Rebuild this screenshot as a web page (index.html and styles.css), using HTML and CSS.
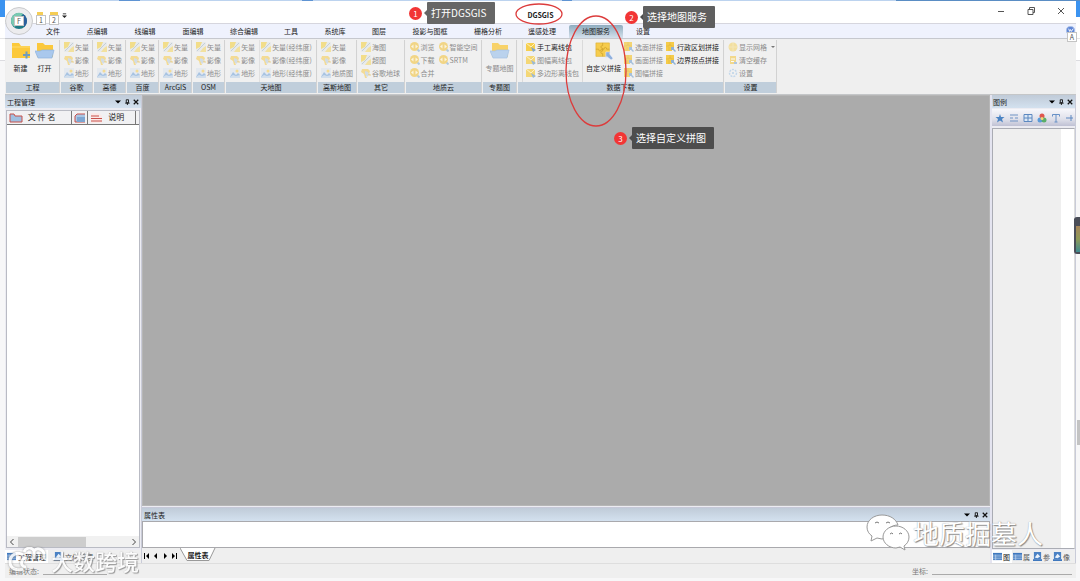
FILE: index.html
```html
<!doctype html>
<html lang="zh-CN">
    <head>
        <meta charset="utf-8">
        <title>DGSGIS</title>
        <link rel="stylesheet" href="styles.css">
    </head>
    <body>
        <svg class="defs" aria-hidden="true">
            <symbol id="vector" viewBox="0 0 10 10">
                <rect width="10" height="10" fill="#e6e9ea" />
                <path d="M0 0h6L4 5 0 7z" fill="#f3d768" />
                <path d="M10 4v6H4l3-4z" fill="#f3dc85" />
                <path d="M1 9l3-3 5-5" stroke="#b4c4d0" fill="none" />
            </symbol>
            <symbol id="image" viewBox="0 0 10 10">
                <path d="M1 1h6l2 2-1 3-2-1-1 2 1 3H4L3 6 0 4z" fill="#f4d477" />
                <path d="M4 3l3 1 1 3-2 2-2-3z" fill="#c8d6e0" />
                <path d="M7 7l2-1v2" stroke="#e8c66b" fill="none" />
            </symbol>
            <symbol id="terrain" viewBox="0 0 10 10">
                <rect width="10" height="10" fill="#e1e7ef" />
                <path d="M0 9l3-5 3 3 2-2 2 2v3H0z" fill="#8fb5de" />
                <path d="M0 9l3-2 3 1 4-1v3H0z" fill="#c7d9eb" />
                <circle cx="7" cy="3" r="1.5" fill="#f4d477" />
            </symbol>
            <symbol id="globe" viewBox="0 0 10 10">
                <path d="M7 7l2.500 2.500" stroke="#9dbddb" stroke-width="2" />
                <circle cx="4.500" cy="4.500" r="4.500" fill="#f2cd63" />
                <path d="M1 4.500l2.500-2v4zM8 4.500l-2.500-2v4z" fill="#fff6d8" />
            </symbol>
            <symbol id="pack" viewBox="0 0 10 10">
                <path d="M0 1h9v8H0z" fill="#f6cf4e" />
                <path d="M0 1l5 4 4-4" stroke="#fff1bd" fill="none" />
                <path d="M5 5l5 3-3 2z" fill="#7ea6cc" />
            </symbol>
            <symbol id="join" viewBox="0 0 10 10">
                <path d="M0 0h8v6H6v3H0z" fill="#f5cb48" />
                <path d="M0 4h3V3h2v1h3M4 0v3M3 5v4" stroke="#d9b03a" stroke-width=".5" fill="none" />
                <path d="M5 5h3v2l2 2-1 1-2-2H5z" fill="#8db1d6" />
            </symbol>
            <symbol id="folder-new" viewBox="0 0 20 18">
                <path d="M1 1h7l2 3h9v12H1z" fill="#fcc93a" />
                <path d="M1 5h18" stroke="#ffdc6c" />
                <path d="M12 13h7M15.500 9.500v7" stroke="#6f9cbd" stroke-width="2" />
            </symbol>
            <symbol id="folder-open" viewBox="0 0 20 18">
                <path d="M2 1h6l2 2h8v12H2z" fill="#fbc83b" />
                <path d="M0 9h5l2-1h12l-2 8H3z" fill="#a9c8ed" stroke="#8db3de" stroke-width=".7" />
            </symbol>
            <symbol id="puzzle" viewBox="0 0 20 20">
                <path d="M1 1h15v15H1z" fill="#f6cc4c" stroke="#dcae2c" stroke-width=".6" />
                <path d="M8.500 1v3q-2 0-2 1.500T8.500 7v3q-2 0-2 1.500t2 1.500v3M1 8h3q0 2 1.500 2T7 8h3q0-2 1.500-2T13 8h3" stroke="#c79a28" stroke-width=".7" fill="none" />
                <path d="M12 11h5l-1 2 4 5-2 2-5-4-1 2z" fill="#8eb0dc" stroke="#eef" stroke-width=".6" />
            </symbol>
            <symbol id="table-blue" viewBox="0 0 10 10">
                <path d="M0 1h10v8H0z" fill="#3f78be" />
                <path d="M0 3.500h10M0 5.500h10M0 7.500h10M3 3v6" stroke="#cfe0f5" stroke-width=".7" />
            </symbol>
            <symbol id="photo-blue" viewBox="0 0 10 10">
                <path d="M1 0h8v8H1z" fill="#4b82c4" />
                <path d="M2 6l3-4 3 3-3 2z" fill="#eaf2fb" />
                <path d="M0 9h10" stroke="#3f78be" stroke-width="2" />
            </symbol>
            <symbol id="caret" viewBox="0 0 8 8"><path d="M0 2h8L4 6z" /></symbol>
            <symbol id="pin" viewBox="0 0 8 8"><path d="M3 1h3v4H3zM1.500 5.500h6M4.500 5v3" fill="none" stroke="#111" stroke-width="1.200" /></symbol>
            <symbol id="close" viewBox="0 0 8 8"><path d="M1 1l6 6M7 1L1 7" stroke="#111" stroke-width="1.600" /></symbol>
        </svg>

        <div class="window">
            <header class="titlebar">
                <button class="orb" aria-label="菜单">
                    <svg viewBox="0 0 28 28">
                        <circle cx="14" cy="14" r="13.500" fill="#ececee" stroke="#c9cacc" />
                        <circle cx="14" cy="14" r="8" fill="#1e7a86" />
                        <path d="M6 14a8 8 0 0 1 12-7l-4 4-4 9a8 8 0 0 1-4-6z" fill="#79c9b0" />
                        <path d="M18 7a8 8 0 0 1 1 13l-2-6z" fill="#2b5f9e" />
                    </svg>
                    <span class="keytip">F</span>
                </button>
                <div class="quick">
                    <button class="quick-btn new"><span class="keytip">1</span></button>
                    <button class="quick-btn open"><span class="keytip">2</span></button>
                    <button class="quick-more" aria-label="更多">
                        <svg viewBox="0 0 6 6"><path d="M1 1h4" stroke="#222" /><path d="M0 3h6L3 6z" fill="#222" /></svg>
                    </button>
                </div>
                <h1>DGSGIS</h1>
                <div class="winbtns">
                    <button aria-label="最小化"><svg viewBox="0 0 8 8"><path d="M1 4.500h6" /></svg></button>
                    <button aria-label="还原"><svg viewBox="0 0 8 8"><path d="M1 2.500h5v5H1zM2.500 2V.500h5v5H6" /></svg></button>
                    <button aria-label="关闭"><svg viewBox="0 0 8 8"><path d="M1 1l6 6M7 1L1 7" /></svg></button>
                </div>
            </header>

            <nav class="tabs">
                <button class="c2">文件</button>
                <button class="c3">点编辑</button>
                <button class="c3">线编辑</button>
                <button class="c3">面编辑</button>
                <button class="c4">综合编辑</button>
                <button class="c2">工具</button>
                <button class="c3">系统库</button>
                <button class="c2">图层</button>
                <button class="c5">投影与图框</button>
                <button class="c4">栅格分析</button>
                <button class="c4">遥感处理</button>
                <button class="c4 active">地图服务</button>
                <button class="c2">设置</button>
                <button class="help" aria-label="帮助">
                    <svg viewBox="0 0 10 10"><circle cx="5" cy="5" r="4.500" fill="#5f86d6" stroke="#a9bfe8" /><path d="M3 3l1 3 1-2 1 2 2-3" stroke="#fff" fill="none" /></svg>
                    <span class="keytip">A</span>
                </button>
            </nav>

            <div class="ribbon">
                <section class="group g-project">
                    <div class="items">
                        <button class="big"><svg><use href="#folder-new" /></svg>新建</button>
                        <button class="big"><svg><use href="#folder-open" /></svg>打开</button>
                    </div>
                    <h2>工程</h2>
                </section>
                <section class="group g-map">
                    <div class="items"><div class="col">
                        <button disabled><svg><use href="#vector" /></svg>矢量</button>
                        <button disabled><svg><use href="#image" /></svg>影像</button>
                        <button disabled><svg><use href="#terrain" /></svg>地形</button>
                    </div></div>
                    <h2>谷歌</h2>
                </section>
                <section class="group g-map">
                    <div class="items"><div class="col">
                        <button disabled><svg><use href="#vector" /></svg>矢量</button>
                        <button disabled><svg><use href="#image" /></svg>影像</button>
                        <button disabled><svg><use href="#terrain" /></svg>地形</button>
                    </div></div>
                    <h2>高德</h2>
                </section>
                <section class="group g-map">
                    <div class="items"><div class="col">
                        <button disabled><svg><use href="#vector" /></svg>矢量</button>
                        <button disabled><svg><use href="#image" /></svg>影像</button>
                        <button disabled><svg><use href="#terrain" /></svg>地形</button>
                    </div></div>
                    <h2>百度</h2>
                </section>
                <section class="group g-map">
                    <div class="items"><div class="col">
                        <button disabled><svg><use href="#vector" /></svg>矢量</button>
                        <button disabled><svg><use href="#image" /></svg>影像</button>
                        <button disabled><svg><use href="#terrain" /></svg>地形</button>
                    </div></div>
                    <h2>ArcGIS</h2>
                </section>
                <section class="group g-map">
                    <div class="items"><div class="col">
                        <button disabled><svg><use href="#vector" /></svg>矢量</button>
                        <button disabled><svg><use href="#image" /></svg>影像</button>
                        <button disabled><svg><use href="#terrain" /></svg>地形</button>
                    </div></div>
                    <h2>OSM</h2>
                </section>
                <section class="group g-tianditu">
                    <div class="items">
                        <div class="col">
                            <button disabled><svg><use href="#vector" /></svg>矢量</button>
                            <button disabled><svg><use href="#image" /></svg>影像</button>
                            <button disabled><svg><use href="#terrain" /></svg>地形</button>
                        </div>
                        <div class="col sep">
                            <button disabled><svg><use href="#vector" /></svg>矢量(经纬度)</button>
                            <button disabled><svg><use href="#image" /></svg>影像(经纬度)</button>
                            <button disabled><svg><use href="#terrain" /></svg>地形(经纬度)</button>
                        </div>
                    </div>
                    <h2>天地图</h2>
                </section>
                <section class="group g-gauss">
                    <div class="items"><div class="col">
                        <button disabled><svg><use href="#vector" /></svg>矢量</button>
                        <button disabled><svg><use href="#image" /></svg>影像</button>
                        <button disabled><svg><use href="#terrain" /></svg>地质图</button>
                    </div></div>
                    <h2>高斯地图</h2>
                </section>
                <section class="group g-other">
                    <div class="items"><div class="col">
                        <button disabled><svg><use href="#vector" /></svg>海图</button>
                        <button disabled><svg><use href="#vector" /></svg>超图</button>
                        <button disabled><svg><use href="#image" /></svg>谷歌地球</button>
                    </div></div>
                    <h2>其它</h2>
                </section>
                <section class="group g-cloud">
                    <div class="items">
                        <div class="col">
                            <button disabled><svg><use href="#globe" /></svg>浏览</button>
                            <button disabled><svg><use href="#globe" /></svg>下载</button>
                            <button disabled><svg><use href="#globe" /></svg>合并</button>
                        </div>
                        <div class="col">
                            <button disabled><svg><use href="#globe" /></svg>智能空间</button>
                            <button disabled><svg><use href="#globe" /></svg>SRTM</button>
                        </div>
                    </div>
                    <h2>地质云</h2>
                </section>
                <section class="group g-theme">
                    <div class="items">
                        <button class="big" disabled><svg><use href="#folder-open" /></svg>专题地图</button>
                    </div>
                    <h2>专题图</h2>
                </section>
                <section class="group g-download">
                    <div class="items">
                        <div class="col sep">
                            <button><svg><use href="#pack" /></svg>手工离线包</button>
                            <button disabled><svg><use href="#pack" /></svg>图幅离线包</button>
                            <button disabled><svg><use href="#pack" /></svg>多边形离线包</button>
                        </div>
                        <button class="big sep"><svg><use href="#puzzle" /></svg>自定义拼接</button>
                        <div class="col">
                            <button disabled><svg><use href="#join" /></svg>选面拼接</button>
                            <button disabled><svg><use href="#join" /></svg>画面拼接</button>
                            <button disabled><svg><use href="#join" /></svg>图幅拼接</button>
                        </div>
                        <div class="col">
                            <button><svg><use href="#join" /></svg>行政区划拼接</button>
                            <button><svg><use href="#join" /></svg>边界拐点拼接</button>
                        </div>
                    </div>
                    <h2>数据下载</h2>
                </section>
                <section class="group g-settings">
                    <div class="items"><div class="col">
                        <button disabled><svg viewBox="0 0 10 10"><circle cx="5" cy="5" r="4.500" fill="#f3da85" /><path d="M1 5h8M5 1v8" stroke="#f6e3a4" /></svg>显示网格<i class="drop"></i></button>
                        <button disabled><svg viewBox="0 0 10 10"><path d="M2 1h6v8H2z" fill="#f3d16a" /><path d="M3 4h4M3 6.500h3" stroke="#fff" /><path d="M6 7h3v2H6z" fill="#9bb9da" /></svg>清空缓存</button>
                        <button disabled><svg viewBox="0 0 10 10"><circle cx="5" cy="5" r="3.500" fill="none" stroke="#b4cfe9" stroke-width="1.500" stroke-dasharray="2 1" /><circle cx="5" cy="5" r="1" fill="#a9c8e6" /></svg>设置</button>
                    </div></div>
                    <h2>设置</h2>
                </section>
            </div>

            <main class="workspace">
                <aside class="project">
                    <div class="panel-title">
                        <span>工程管理</span>
                        <button aria-label="菜单"><svg><use href="#caret" /></svg></button>
                        <button aria-label="固定"><svg><use href="#pin" /></svg></button>
                        <button aria-label="关闭"><svg><use href="#close" /></svg></button>
                    </div>
                    <div class="file-list">
                        <table>
                            <tr>
                                <th class="name">
                                    <svg viewBox="0 0 14 10"><path d="M1 1h4l1 2h7v6H1z" fill="#9fc0e2" stroke="#c8504b" /></svg>
                                    文 件 名
                                </th>
                                <th class="kind"><svg viewBox="0 0 14 10"><path d="M11 1H3L1 3v6h10" fill="#a9c6e4" stroke="#c8504b" /><path d="M3 4h8v5H3z" fill="#7ea6d2" /></svg></th>
                                <th class="desc">
                                    <svg viewBox="0 0 14 10"><path d="M1 0h8l3 3v7H1z" fill="#fbe9e7" /><path d="M1 3h8M1 5.500h11M1 8h11" stroke="#c8504b" /></svg>
                                    说明
                                </th>
                                <th class="rest"></th>
                            </tr>
                        </table>
                        <div class="hscroll">
                            <svg viewBox="0 0 6 8"><path d="M4.500 1L1.500 4l3 3" /></svg>
                            <div class="track"><div class="thumb"></div></div>
                            <svg viewBox="0 0 6 8"><path d="M1.500 1l3 3-3 3" /></svg>
                        </div>
                    </div>
                    <div class="dock-tabs">
                        <button class="active"><svg><use href="#table-blue" /></svg>工程管理</button>
                        <button><svg><use href="#photo-blue" /></svg>文件管理</button>
                    </div>
                </aside>

                <section class="center">
                    <div class="canvas"></div>
                    <div class="attributes">
                        <div class="panel-title">
                            <span>属性表</span>
                            <button aria-label="菜单"><svg><use href="#caret" /></svg></button>
                            <button aria-label="固定"><svg><use href="#pin" /></svg></button>
                            <button aria-label="关闭"><svg><use href="#close" /></svg></button>
                        </div>
                        <div class="sheet"></div>
                        <div class="sheet-tabs">
                            <button aria-label="第一页"><svg viewBox="0 0 6 6"><path d="M0 0h1v6H0zM5 0v6L2 3z" /></svg></button>
                            <button aria-label="上一页"><svg viewBox="0 0 6 6"><path d="M4 0v6L1 3z" /></svg></button>
                            <button aria-label="下一页"><svg viewBox="0 0 6 6"><path d="M2 0v6l3-3z" /></svg></button>
                            <button aria-label="最后一页"><svg viewBox="0 0 6 6"><path d="M1 0v6l3-3zM5 0h1v6H5z" /></svg></button>
                            <button class="sheet-tab">
                                <svg viewBox="0 0 36 14"><path d="M0 0l7 12.500h22L35 0" fill="#fff" stroke="#999" /></svg>
                                <span>属性表</span>
                            </button>
                        </div>
                    </div>
                </section>

                <aside class="legend">
                    <div class="panel-title">
                        <span>图例</span>
                        <button aria-label="菜单"><svg><use href="#caret" /></svg></button>
                        <button aria-label="固定"><svg><use href="#pin" /></svg></button>
                        <button aria-label="关闭"><svg><use href="#close" /></svg></button>
                    </div>
                    <div class="toolbar">
                        <button aria-label="点"><svg viewBox="0 0 10 10"><path d="M5 1l1 3h3.500L7 6l1 3.500-3-2-3 2L3 6 .500 4H4z" fill="#4b83c3" /></svg></button>
                        <button aria-label="线"><svg viewBox="0 0 10 10"><path d="M1 2h8M1 5h3M6 5h3M1 8h8" stroke="#6e93c4" /></svg></button>
                        <button aria-label="面"><svg viewBox="0 0 10 10"><path d="M1 1.500h8v7H1zM5 1.500v7M1 5h8" stroke="#5c88c0" fill="#dce8f6" /></svg></button>
                        <button aria-label="颜色"><svg viewBox="0 0 10 10"><circle cx="5" cy="3" r="2.500" fill="#e0564e" /><circle cx="3" cy="7" r="2.500" fill="#5a9ad8" /><circle cx="7" cy="7" r="2.500" fill="#5aae6a" /><circle cx="5" cy="5.500" r="1.500" fill="#f2d77a" /></svg></button>
                        <button aria-label="文字"><svg viewBox="0 0 10 10"><path d="M1.500 3.500V1.500h7v2M5 1.500V9M3.500 9h3" stroke="#6790c6" fill="none" /></svg></button>
                        <button aria-label="更多"><svg viewBox="0 0 10 10"><path d="M1 5h7M6 2v6" stroke="#5c88c0" /></svg></button>
                    </div>
                    <div class="legend-list"><div></div></div>
                    <div class="dock-tabs">
                        <button class="active"><svg><use href="#table-blue" /></svg>图</button>
                        <button><svg><use href="#table-blue" /></svg>属</button>
                        <button><svg><use href="#photo-blue" /></svg>参</button>
                        <button><svg><use href="#photo-blue" /></svg>像</button>
                    </div>
                </aside>
            </main>

            <footer class="status">
                <span>编辑状态:</span><i class="line state"></i>
                <span class="coord">坐标:</span><i class="line"></i>
            </footer>
        </div>

        <!-- things behind and beside the window -->
        <div class="monitor"></div>
        <div class="page-thumb"></div>

        <!-- steps -->
        <svg class="ring ring-title" viewBox="0 0 48 22"><ellipse cx="24" cy="11" rx="23" ry="10" /></svg>
        <svg class="ring ring-tool" viewBox="0 0 62 112"><ellipse cx="31" cy="56" rx="30" ry="55" /></svg>
        <div class="step step-1"><b>1</b><span>打开DGSGIS</span></div>
        <div class="step step-2"><b>2</b><span>选择地图服务</span></div>
        <div class="step step-3"><b>3</b><span>选择自定义拼图</span></div>

        <div class="mark mark-left">
            <svg viewBox="0 0 40 26"><path d="M15 8C9 4 2 8 2 15s7 9 13 7M19 11c-6-1-8 9-1 9M16 5c2-5 8-5 10-1 3-4 10-2 10 4v4M26 4v8" /></svg>
            <span>大数跨境</span>
        </div>
        <div class="mark mark-right">
            <svg viewBox="0 0 44 38">
                <path d="M16 1C8 1 1 6 1 13c0 4 2 7 5 9l-1 5 6-3 5 1 4-1c-1-8 5-13 12-13C30 5 24 1 16 1z" />
                <path d="M30 12c-7 0-13 5-13 11s6 11 13 11l4-1 5 3-1-4c3-2 5-5 5-9 0-6-6-11-13-11z" />
                <path class="eyes" d="M9 9q2-2 4 0M20 9q2-2 4 0M24 20q2-2 3 0M33 20q2-2 3 0" />
            </svg>
            <span>地质掘墓人</span>
        </div>
    </body>
</html>
```

FILE: styles.css
```css
* {
    box-sizing: border-box;
}

body {
    margin: 0;
    height: 100vh;
    padding: 1px 4px 3px 5px;
    display: flex;
    position: relative;
    overflow: hidden;
    font: 7px/10px "Noto Sans CJK SC", sans-serif;
    color: #1c1c1c;
    background:
        linear-gradient(90deg, #3b93f0 5px, #bcd3ef 5px 11%, #5f94d3 11% 13%, #bcd3ef 13% 28%, #5f94d3 28% 29%, #bcd3ef 29% 52%, #5f94d3 52% 53%, #bcd3ef 53% 83%, #5a8dc4 83%) 0 0 / 100% 1px no-repeat,
        linear-gradient(#3b93f0 17px, #fff 17px 38px, #e4e4e6 38px 39px, #fff 39px 60px, #dcdce0 60px 61px, #f7f7f8 61px);
}

button {
    font: inherit;
    color: inherit;
    border: 0;
    padding: 0;
    margin: 0;
    background: none;
    white-space: nowrap;
}

h1, h2 {
    margin: 0;
    font-size: 7px;
    font-weight: normal;
}

svg {
    display: block;
    flex: none;
}

.defs {
    position: absolute;
    width: 0;
    height: 0;
}

.window {
    flex: 1;
    min-width: 0;
    display: flex;
    flex-direction: column;
    background: #efefef;
}

/* title bar */
.titlebar {
    height: 22px;
    position: relative;
    display: flex;
    align-items: center;
    justify-content: center;
    background: #fff;

    h1 {
        font-weight: bold;
        padding-top: 6px;
    }
}

.keytip {
    display: block;
    width: 10px;
    height: 10px;
    line-height: 9px;
    border: 1px solid #c4c4c4;
    background: #fff;
    color: #555;
    text-align: center;
}

.orb {
    position: absolute;
    left: 0;
    top: 6px;
    width: 28px;
    height: 28px;
    z-index: 2;

    .keytip {
        position: absolute;
        left: 9px;
        top: 9px;
    }
}

.quick {
    position: absolute;
    left: 31px;
    top: 10px;
    display: flex;
    gap: 3px;
    z-index: 2;
}

.quick-btn {
    padding-top: 4px;
    background: linear-gradient(#f5cd55, #f5cd55) 1px 1px / 6px 5px no-repeat;

    &.open {
        background-size: 8px 4px;
    }
}

.quick-more svg {
    width: 5px;
    height: 5px;
    margin-bottom: 6px;
}

.winbtns {
    position: absolute;
    right: 0;
    top: 0;
    display: flex;

    button {
        width: 30px;
        height: 20px;
        display: grid;
        place-items: center;
    }

    svg {
        width: 8px;
        height: 8px;
        fill: none;
        stroke: #555;
        stroke-width: 1;
    }
}

/* menu */
.tabs {
    height: 16px;
    display: flex;
    padding: 1px 0 0 28px;
    position: relative;
    background: #eff2fd;
    border-top: 1px solid #d6d6de;
    border-bottom: 1px solid #c6c8ce;

    button {
        padding-bottom: 2px;
    }

    .c2 { width: 40px; }
    .c3 { width: 48px; }
    .c4 { width: 54px; }
    .c5 { width: 62px; }

    .active {
        background: linear-gradient(#8fadbf, #d4e0ec);
        border-radius: 2px 2px 0 0;
    }

    .help {
        position: absolute;
        right: 0;
        top: 2px;
        width: 10px;

        svg {
            width: 9px;
            height: 9px;
        }

        .keytip {
            position: absolute;
            left: 1px;
            top: 6px;
        }
    }
}

/* ribbon */
.ribbon {
    height: 56px;
    display: flex;
    gap: 2px;
    padding: 1px;
    border-bottom: 1px solid #c4c6c8;
}

.group {
    display: flex;
    flex-direction: column;
    background: #f0f0f0;
    box-shadow: 1px 0 #d2d2d2;

    h2 {
        height: 11px;
        line-height: 11px;
        text-align: center;
        background: #c0cedb;
    }
}

.g-project { width: 53px; }
.g-map { width: 31px; }
.g-tianditu { width: 90px; }
.g-gauss { width: 38px; }
.g-other { width: 46px; }
.g-cloud { width: 75px; }
.g-theme { width: 33px; }
.g-download { width: 205px; }
.g-settings { width: 51px; }

.items {
    flex: 1;
    display: flex;
    justify-content: center;
    gap: 4px;

    button:disabled {
        color: #8c8c8c;
    }

    button:disabled svg {
        opacity: .75;
    }
}

.col {
    display: flex;
    flex-direction: column;

    button {
        height: 13px;
        display: flex;
        align-items: center;
        gap: 1px;
    }

    svg {
        width: 10px;
        height: 10px;
    }
}

.g-tianditu .sep {
    border-left: 1px solid #e0e0e0;
    padding-left: 1px;
}

.g-other .items,
.g-gauss .items,
.g-settings .items {
    justify-content: flex-start;
    padding-left: 3px;
}

.big {
    display: flex;
    flex-direction: column;
    align-items: center;
    gap: 3px;
    padding-top: 2px;

    svg {
        width: 20px;
        height: 18px;
    }
}

.g-download {
    .items {
        gap: 3px;
    }

    .sep {
        border-left: 1px solid #dadada;
        padding-left: 3px;
    }
}

.drop {
    margin-left: 3px;
    border: 2px solid transparent;
    border-top-color: #777;
    border-bottom: 0;
}

/* docking area */
.workspace {
    flex: 1;
    min-height: 0;
    display: flex;
    background: #ececf2;
}

.panel-title {
    height: 13px;
    display: flex;
    align-items: center;
    gap: 3px;
    padding: 0 2px;
    background: linear-gradient(#c0cbd8, #d3e1ef);

    span {
        flex: 1;
    }

    svg {
        width: 6px;
        height: 6px;
    }
}

.project {
    width: 137px;
    display: flex;
    flex-direction: column;
    border-right: 1px solid #c9cbd8;
}

.file-list {
    flex: 1;
    display: flex;
    flex-direction: column;
    justify-content: space-between;
    margin: 2px 1px;
    border: 1px solid #b9bbc4;
    background: #fff;

    table {
        width: 100%;
        table-layout: fixed;
        border-collapse: collapse;
    }

    th {
        height: 13px;
        padding: 0 0 0 2px;
        font-size: 8px;
        font-weight: normal;
        text-align: left;
        white-space: nowrap;
        background: #f1f1f3;
        border-right: 1px solid #777;
        border-bottom: 1px solid #777;
    }

    th svg {
        display: inline-block;
        vertical-align: middle;
        width: 14px;
        height: 10px;
        margin-right: 3px;
    }

    .name { width: 64px; }
    .kind { width: 16px; }
    .rest { border-right: 0; width: 4px; }
}

.hscroll {
    height: 11px;
    display: flex;
    align-items: center;
    gap: 3px;
    padding: 0 2px;
    background: #f1f1f1;

    svg {
        width: 6px;
        height: 8px;
        fill: none;
        stroke: #444;
    }

    .track {
        flex: 1;
        height: 10px;
    }

    .thumb {
        width: 62%;
        height: 100%;
        background: #cdcdcd;
    }
}

.dock-tabs {
    height: 13px;
    display: flex;
    background: #efefef;

    button {
        display: flex;
        align-items: center;
        gap: 2px;
        padding: 0 2px;
        color: #555;
    }

    .active {
        background: #fff;
        color: #111;
    }

    svg {
        width: 9px;
        height: 9px;
    }
}

.project .dock-tabs {
    gap: 4px;
}

.center {
    flex: 1;
    min-width: 0;
    display: flex;
    flex-direction: column;
}

.canvas {
    flex: 1;
    background: #ababab;
    border: 1px solid #b6b6b6;
}

.attributes {
    margin-top: 1px;
    border-top: 1px solid #c6c8d8;
}

.sheet {
    height: 27px;
    background: #fff;
    border: 1px solid #a9a9ad;
}

.sheet-tabs {
    height: 15px;
    display: flex;
    align-items: center;
    gap: 3px;
    padding-left: 2px;
    background: #efefef;

    svg {
        width: 6px;
        height: 6px;
    }
}

.sheet-tab {
    width: 36px;
    height: 14px;
    position: relative;
    font-weight: bold;
    align-self: flex-start;

    svg {
        position: absolute;
        inset: 0;
        width: 36px;
        height: 14px;
    }

    span {
        position: relative;
    }
}

.legend {
    width: 86px;
    display: flex;
    flex-direction: column;
    border-left: 2px solid #e4e4f0;
    border-right: 1px solid #c9cbd8;

    .panel-title {
        padding: 0 2px 0 1px;
    }
}

.toolbar {
    height: 17px;
    display: flex;
    align-items: center;
    gap: 4px;
    margin-top: 1px;
    padding-left: 3px;
    overflow: hidden;
    background: linear-gradient(#f7f7fb, #dfe0ea 60%, #bfc1d4);

    svg {
        width: 10px;
        height: 10px;
    }
}

.legend-list {
    flex: 1;
    margin: 2px 0 1px;
    border: 1px solid #aaacb4;
    border-right-color: #ddd;
    background: #fff;

    div {
        height: 100%;
        margin-right: 13px;
        background: #efefef;
    }
}

.legend .dock-tabs button {
    gap: 1px;
    padding: 0 2px 0 1px;
}

.status {
    height: 15px;
    display: flex;
    align-items: center;
    gap: 4px;
    padding: 0 4px;
    color: #777;
    border-top: 1px solid #dedede;

    .line {
        width: 140px;
        height: 8px;
        border-bottom: 1px solid #aaa;
    }

    .state {
        width: 64px;
    }

    .coord {
        margin-left: auto;
    }
}

/* right screen edge */
.monitor {
    position: absolute;
    right: 0;
    top: 217px;
    width: 6px;
    height: 37px;
    border: 2px solid #4a4d58;
    border-right: 0;
    border-radius: 3px 0 0 3px;
    border-top-width: 9px;
    background: linear-gradient(#a6845a, #8f9a58, #3f8b91);
}

.page-thumb {
    position: absolute;
    right: 0;
    top: 420px;
    width: 3px;
    height: 25px;
    background: #c3c3c3;
}

/* steps */
.ring {
    position: absolute;
    fill: none;
    stroke: #dc3c3c;
    stroke-width: 1.3;
}

.ring-title {
    left: 515px;
    top: 3px;
    width: 48px;
    height: 22px;
}

.ring-tool {
    left: 565px;
    top: 15px;
    width: 62px;
    height: 112px;
}

.step {
    position: absolute;
    display: flex;
    align-items: center;
    gap: 5px;
    font-size: 10px;
    color: #fff;

    b {
        width: 13px;
        height: 13px;
        border-radius: 50%;
        background: #f23535;
        font-size: 8px;
        font-weight: normal;
        line-height: 13px;
        text-align: center;
    }

    span {
        position: relative;
        height: 22px;
        padding: 0 8px 0 4px;
        line-height: 22px;
        border-radius: 1px;
        background: #4d4d4d;
    }

    span::before {
        content: "";
        position: absolute;
        left: -3px;
        top: 8px;
        border: 3px solid transparent;
        border-right-color: #4d4d4d;
        border-left: 0;
    }
}

.step-1 {
    left: 409px;
    top: 2px;

    span { background: #666; }
    span::before { border-right-color: #666; }
}

.step-2 {
    left: 625px;
    top: 6px;

    span { background: #5f5f5f; }
}

.step-3 {
    left: 614px;
    top: 127px;
}

/* watermarks */
.mark {
    position: absolute;
    display: flex;
    align-items: center;
    color: #fff;
    white-space: nowrap;
    text-shadow: 1px 1px 1px #888, 0 0 1px #999;

    svg {
        fill: #fff;
        stroke: #999;
        stroke-width: 1;
    }
}

.mark-left {
    left: 8px;
    bottom: 8px;
    gap: 3px;
    font-size: 22px;
    line-height: 26px;
    font-weight: 500;
    opacity: .85;

    svg {
        width: 40px;
        height: 26px;
        fill: none;
        stroke: #fff;
        stroke-width: 3;
        filter: drop-shadow(0 0 1px #888);
    }
}

.mark-right {
    right: 37px;
    bottom: 29px;
    gap: 3px;
    font-size: 26px;
    line-height: 38px;

    svg {
        width: 44px;
        height: 38px;
    }

    .eyes {
        fill: none;
        stroke: #777;
    }
}
```
